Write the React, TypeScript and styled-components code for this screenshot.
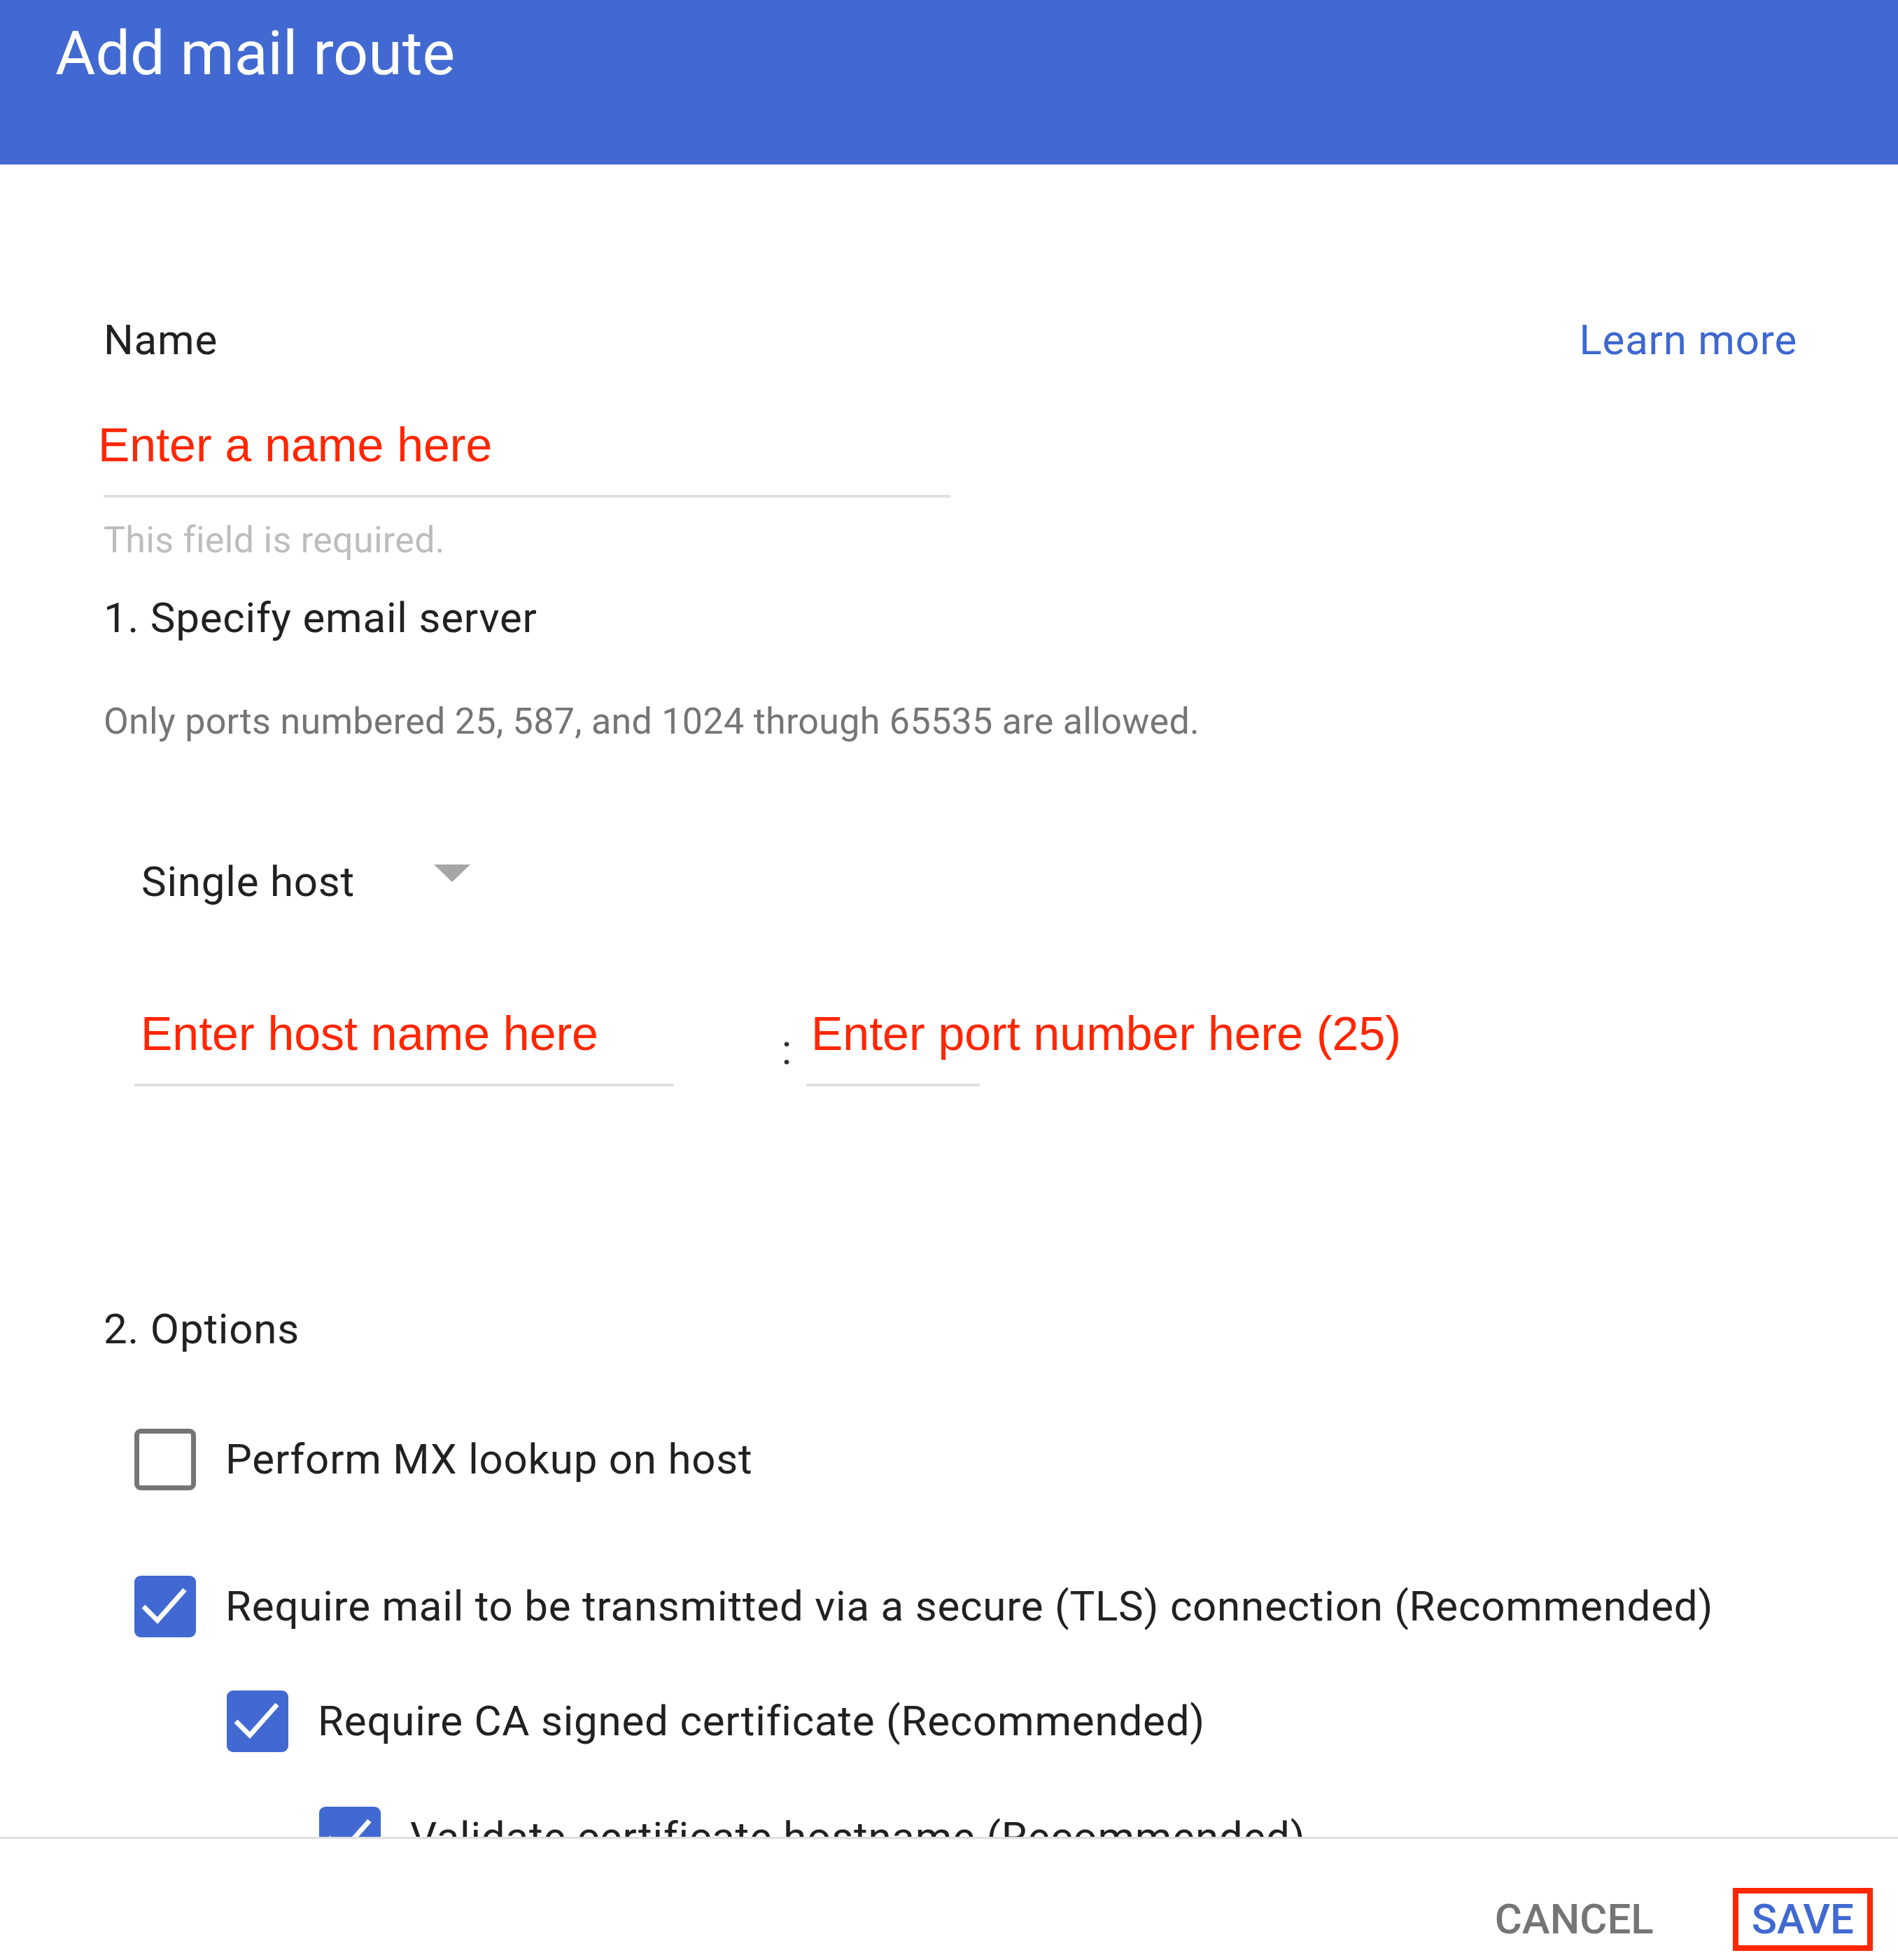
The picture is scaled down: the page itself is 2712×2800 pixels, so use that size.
import React from 'react';
import styled, { createGlobalStyle } from 'styled-components';

const GlobalStyle = createGlobalStyle`
  html, body {
    margin: 0;
    padding: 0;
    background: #ffffff;
  }
  * {
    box-sizing: border-box;
  }
`;

const BLUE = '#4169d1';
const RED = '#ff2600';

const Page = styled.div`
  width: 2712px;
  height: 2800px;
  display: flex;
  flex-direction: column;
  overflow: hidden;
  font-family: Roboto, 'Liberation Sans', sans-serif;
  background: #ffffff;
`;

const Header = styled.header`
  flex-shrink: 0;
  height: 235px;
  background: ${BLUE};
  padding: 32px 0 0 79px;
`;

const Title = styled.h1`
  margin: 0;
  font-size: 88px;
  line-height: 88px;
  font-weight: 400;
  color: #ffffff;
`;

const Content = styled.main`
  flex: 1;
  min-height: 0;
  overflow: hidden;
  display: flex;
  flex-direction: column;
  padding: 221px 144px 0 148px;
`;

const TopRow = styled.div`
  display: flex;
  justify-content: space-between;
  align-items: flex-start;
`;

const Heading = styled.div<{ $mt?: number }>`
  margin-top: ${(p) => p.$mt ?? 0}px;
  font-size: 60px;
  line-height: 60px;
  letter-spacing: 0.8px;
  color: #212121;
`;

const LearnMore = styled.a`
  font-size: 60px;
  line-height: 60px;
  letter-spacing: 0.8px;
  color: #3e68d0;
  text-decoration: none;
`;

const Field = styled.div<{ $width: number; $mt?: number }>`
  width: ${(p) => p.$width}px;
  margin-top: ${(p) => p.$mt ?? 0}px;
  padding-bottom: 38px;
  border-bottom: 4px solid #e0e0e0;
  flex-shrink: 0;
`;

const FieldText = styled.div<{ $shift: number }>`
  margin-left: ${(p) => p.$shift}px;
  font-family: 'Liberation Sans', Arial, sans-serif;
  font-size: 68px;
  line-height: 68px;
  color: ${RED};
  white-space: nowrap;
`;

const Helper = styled.div<{ $mt: number; $color: string }>`
  margin-top: ${(p) => p.$mt}px;
  font-size: 52px;
  line-height: 52px;
  letter-spacing: 0.3px;
  color: ${(p) => p.$color};
`;

const Select = styled.div`
  margin: 173px 0 0 44px;
  display: flex;
  align-items: flex-start;
`;

const SelectValue = styled.div`
  width: 428px;
  padding-left: 10px;
  font-size: 60px;
  line-height: 60px;
  letter-spacing: 0.8px;
  color: #212121;
`;

const Arrow = styled.span`
  margin-top: 5px;
  width: 0;
  height: 0;
  border-left: 26px solid transparent;
  border-right: 26px solid transparent;
  border-top: 25px solid #a6a6a6;
`;

const HostRow = styled.div`
  margin: 152px 0 0 44px;
  display: flex;
  align-items: flex-start;
`;

const Colon = styled.span`
  margin: 28px 13px 0 147px;
  width: 30px;
  text-align: center;
  font-size: 60px;
  line-height: 60px;
  color: #333333;
`;

const CheckRow = styled.label<{ $mt: number; $indent: number }>`
  margin: ${(p) => p.$mt}px 0 0 ${(p) => p.$indent}px;
  display: flex;
  align-items: center;
  gap: 42px;
  flex-shrink: 0;
`;

const Box = styled.span<{ $checked: boolean }>`
  width: 88px;
  height: 88px;
  flex-shrink: 0;
  border-radius: 9px;
  display: flex;
  align-items: center;
  justify-content: center;
  background: ${(p) => (p.$checked ? BLUE : '#ffffff')};
  border: ${(p) => (p.$checked ? 'none' : '7px solid #757575')};
`;

const CheckText = styled.span`
  font-size: 60px;
  line-height: 60px;
  letter-spacing: 0.8px;
  color: #212121;
  white-space: nowrap;
`;

const Footer = styled.footer`
  flex-shrink: 0;
  height: 176px;
  border-top: 3px solid #e0e0e0;
  display: flex;
  justify-content: flex-end;
  align-items: flex-start;
  gap: 86px;
  padding: 70px 36px 0 0;
`;

const Button = styled.button<{ $primary?: boolean }>`
  height: 90px;
  padding: 0 19px;
  border: 8px solid ${(p) => (p.$primary ? RED : 'transparent')};
  background: transparent;
  font-family: Roboto, 'Liberation Sans', sans-serif;
  font-weight: 500;
  font-size: 60px;
  line-height: 74px;
  color: ${(p) => (p.$primary ? BLUE : '#757575')};
  cursor: pointer;
`;

const Check: React.FC<{ checked: boolean }> = ({ checked }) => (
  <Box $checked={checked}>
    {checked && (
      <svg width="88" height="88" viewBox="0 0 88 88">
        <polyline
          points="13,44 33,64 72,20"
          fill="none"
          stroke="#ffffff"
          strokeWidth="7"
          strokeLinejoin="miter"
        />
      </svg>
    )}
  </Box>
);

const options = [
  { label: 'Perform MX lookup on host', checked: false, mt: 112, indent: 44 },
  {
    label: 'Require mail to be transmitted via a secure (TLS) connection (Recommended)',
    checked: true,
    mt: 122,
    indent: 44,
  },
  { label: 'Require CA signed certificate (Recommended)', checked: true, mt: 76, indent: 176 },
  { label: 'Validate certificate hostname (Recommended)', checked: true, mt: 78, indent: 308 },
];

const App: React.FC = () => {
  return (
    <>
      <GlobalStyle />
      <Page>
        <Header>
          <Title>Add mail route</Title>
        </Header>
        <Content>
          <TopRow>
            <Heading>Name</Heading>
            <LearnMore href="#">Learn more</LearnMore>
          </TopRow>
          <Field $width={1210} $mt={85}>
            <FieldText $shift={-8}>Enter a name here</FieldText>
          </Field>
          <Helper $mt={35} $color="#bdbdbd">
            This field is required.
          </Helper>
          <Heading $mt={55}>1. Specify email server</Heading>
          <Helper $mt={92} $color="#757575">
            Only ports numbered 25, 587, and 1024 through 65535 are allowed.
          </Helper>
          <Select>
            <SelectValue>Single host</SelectValue>
            <Arrow />
          </Select>
          <HostRow>
            <Field $width={770}>
              <FieldText $shift={9}>Enter host name here</FieldText>
            </Field>
            <Colon>:</Colon>
            <Field $width={248}>
              <FieldText $shift={7}>Enter port number here (25)</FieldText>
            </Field>
          </HostRow>
          <Heading $mt={317}>2. Options</Heading>
          {options.map((o) => (
            <CheckRow key={o.label} $mt={o.mt} $indent={o.indent}>
              <Check checked={o.checked} />
              <CheckText>{o.label}</CheckText>
            </CheckRow>
          ))}
        </Content>
        <Footer>
          <Button>CANCEL</Button>
          <Button $primary>SAVE</Button>
        </Footer>
      </Page>
    </>
  );
};

export default App;
